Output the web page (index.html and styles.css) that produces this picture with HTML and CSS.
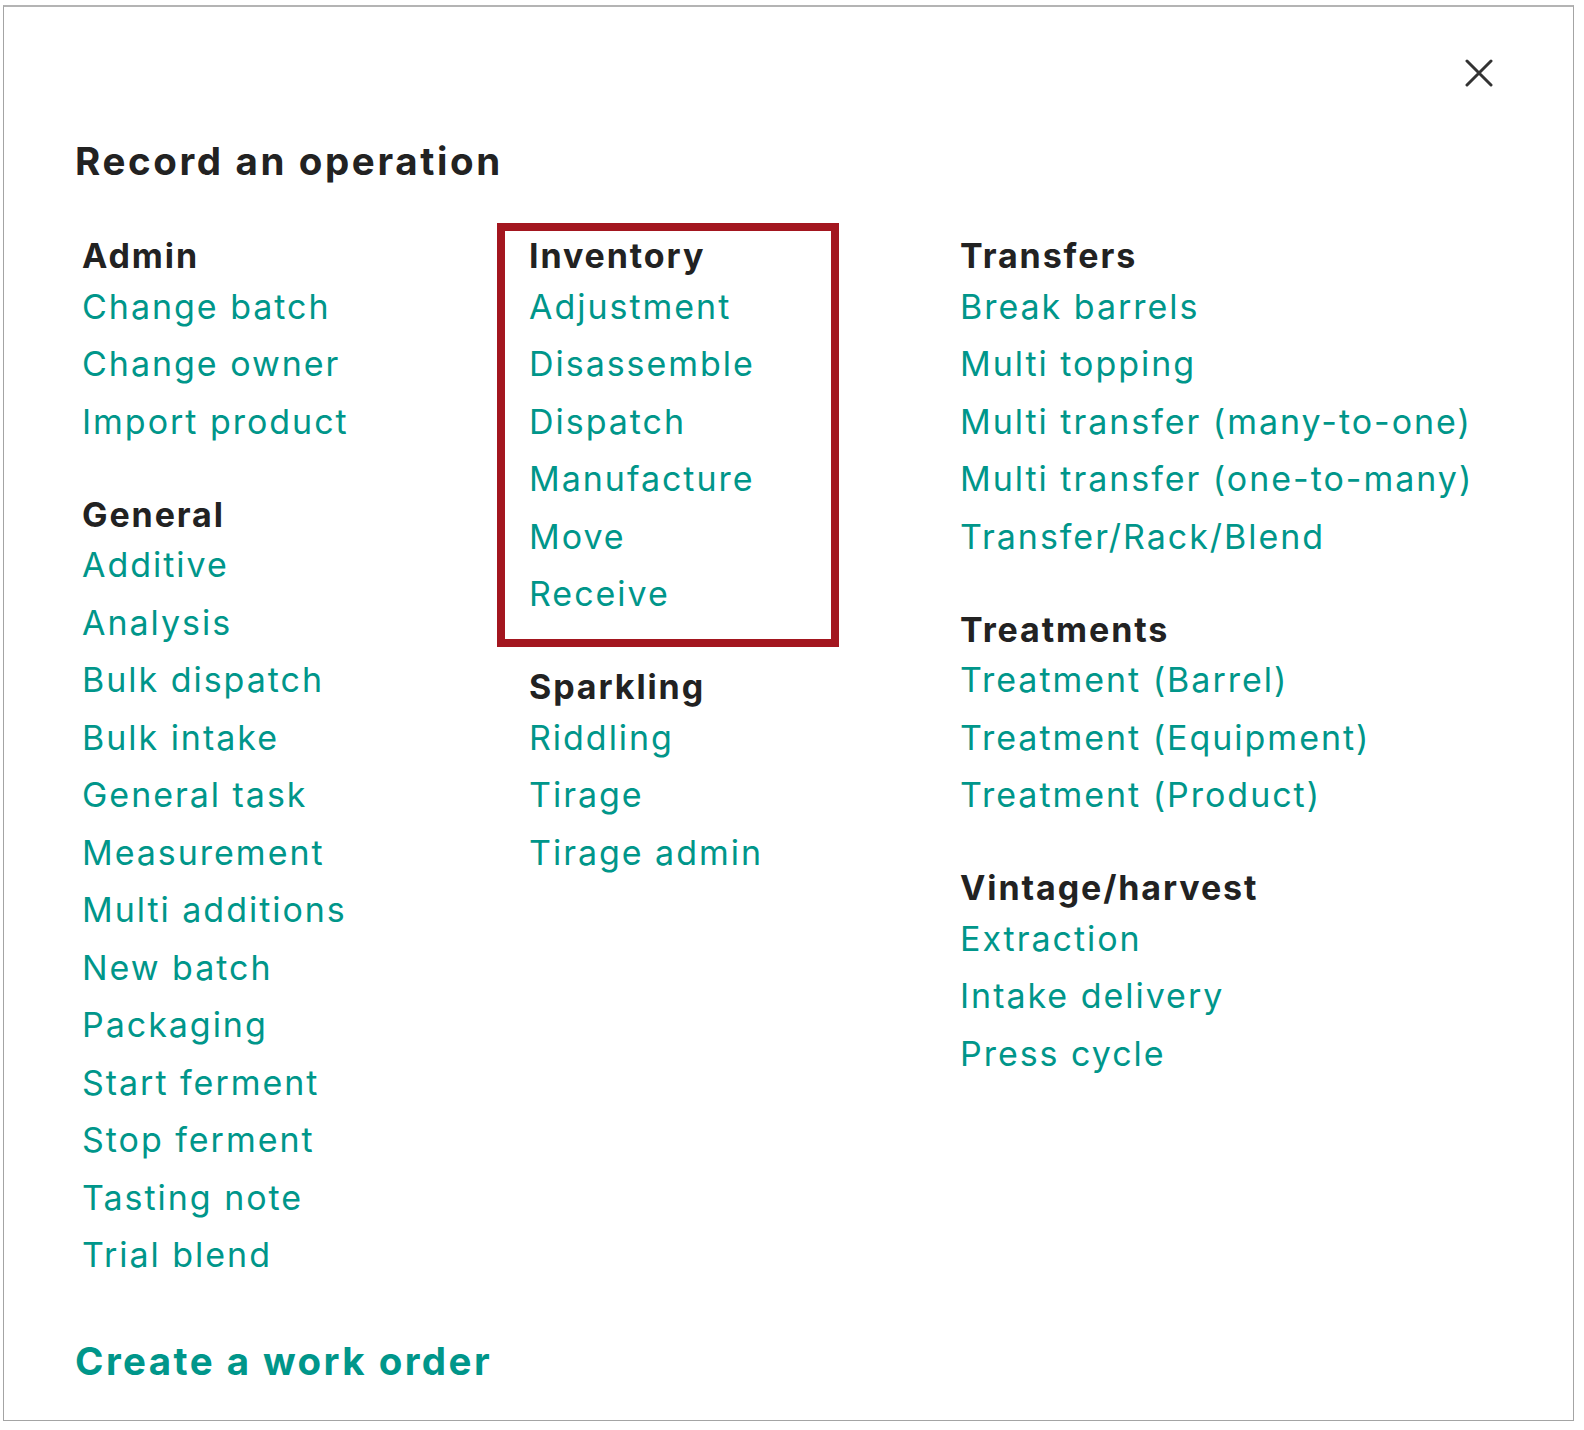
FILE: index.html
```html
<!DOCTYPE html>
<html lang="en">
<head>
<meta charset="utf-8">
<title>Record an operation</title>
<link rel="stylesheet" href="styles.css">
</head>
<body>
<div class="modal">
  <button class="close" aria-label="Close">
    <svg viewBox="0 0 28 28" width="28" height="28"><path d="M2 2 L26 26 M26 2 L2 26" stroke="#333" stroke-width="3" stroke-linecap="round" fill="none"/></svg>
  </button>
  <h1 class="title">Record an operation</h1>
  <div class="columns">
    <div class="col col-1">
      <section class="group">
        <h2 class="group-title">Admin</h2>
        <a class="op" href="#">Change batch</a>
        <a class="op" href="#">Change owner</a>
        <a class="op" href="#">Import product</a>
      </section>
      <section class="group">
        <h2 class="group-title">General</h2>
        <a class="op" href="#">Additive</a>
        <a class="op" href="#">Analysis</a>
        <a class="op" href="#">Bulk dispatch</a>
        <a class="op" href="#">Bulk intake</a>
        <a class="op" href="#">General task</a>
        <a class="op" href="#">Measurement</a>
        <a class="op" href="#">Multi additions</a>
        <a class="op" href="#">New batch</a>
        <a class="op" href="#">Packaging</a>
        <a class="op" href="#">Start ferment</a>
        <a class="op" href="#">Stop ferment</a>
        <a class="op" href="#">Tasting note</a>
        <a class="op" href="#">Trial blend</a>
      </section>
    </div>
    <div class="col col-2">
      <section class="group highlighted">
        <h2 class="group-title">Inventory</h2>
        <a class="op" href="#">Adjustment</a>
        <a class="op" href="#">Disassemble</a>
        <a class="op" href="#">Dispatch</a>
        <a class="op" href="#">Manufacture</a>
        <a class="op" href="#">Move</a>
        <a class="op" href="#">Receive</a>
      </section>
      <section class="group">
        <h2 class="group-title">Sparkling</h2>
        <a class="op" href="#">Riddling</a>
        <a class="op" href="#">Tirage</a>
        <a class="op" href="#">Tirage admin</a>
      </section>
    </div>
    <div class="col col-3">
      <section class="group">
        <h2 class="group-title">Transfers</h2>
        <a class="op" href="#">Break barrels</a>
        <a class="op" href="#">Multi topping</a>
        <a class="op" href="#">Multi transfer (many-to-one)</a>
        <a class="op" href="#">Multi transfer (one-to-many)</a>
        <a class="op" href="#">Transfer/Rack/Blend</a>
      </section>
      <section class="group">
        <h2 class="group-title">Treatments</h2>
        <a class="op" href="#">Treatment (Barrel)</a>
        <a class="op" href="#">Treatment (Equipment)</a>
        <a class="op" href="#">Treatment (Product)</a>
      </section>
      <section class="group">
        <h2 class="group-title">Vintage/harvest</h2>
        <a class="op" href="#">Extraction</a>
        <a class="op" href="#">Intake delivery</a>
        <a class="op" href="#">Press cycle</a>
      </section>
    </div>
  </div>
  <a class="work-order" href="#">Create a work order</a>
</div>
</body>
</html>
```
FILE: styles.css
```css
*, *::before, *::after { box-sizing: border-box; }

html, body {
  margin: 0;
  padding: 0;
  background: #ffffff;
}

body {
  font-family: Inter, "Noto Sans", "Liberation Sans", sans-serif;
  color: #222222;
}

.modal {
  position: relative;
  margin: 5px 0 0 3px;
  width: 1571px;
  height: 1416px;
  border: 1px solid #a4a4a4;
  border-top: 2px solid #b4b4b4;
  background: #ffffff;
  padding: 130px 60px 0 71px;
  display: flex;
  flex-direction: column;
}

.close {
  position: absolute;
  top: 52px;
  right: 80px;
  width: 28px;
  height: 28px;
  padding: 0;
  border: 0;
  background: none;
  cursor: pointer;
}

.close svg { display: block; }

.title {
  margin: 0;
  font-size: 38.5px;
  line-height: 48px;
  font-weight: 700;
  letter-spacing: 0.068em;
  color: #222222;
}

.columns {
  margin-top: 49px;
  margin-left: 7px;
  display: grid;
  grid-template-columns: 447px 431px 1fr;
}

.col {
  display: flex;
  flex-direction: column;
  gap: 42.5px;
}

.group {
  display: flex;
  flex-direction: column;
  align-items: flex-start;
}

.group-title {
  margin: 0;
  font-size: 34px;
  line-height: 43.5px;
  font-weight: 700;
  letter-spacing: 0.056em;
  color: #222222;
}

.op {
  font-size: 34px;
  line-height: 57.5px;
  font-weight: 400;
  letter-spacing: 0.058em;
  color: #00968a;
  text-decoration: none;
  white-space: nowrap;
}

.highlighted {
  position: relative;
}

.highlighted::after {
  content: "";
  position: absolute;
  left: -32px;
  top: -11px;
  width: 342px;
  height: 424px;
  border: 8px solid #a3161f;
  pointer-events: none;
}

.work-order {
  margin-top: 53px;
  font-size: 38.5px;
  line-height: 48px;
  font-weight: 700;
  letter-spacing: 0.063em;
  color: #00968a;
  text-decoration: none;
  align-self: flex-start;
}
```
